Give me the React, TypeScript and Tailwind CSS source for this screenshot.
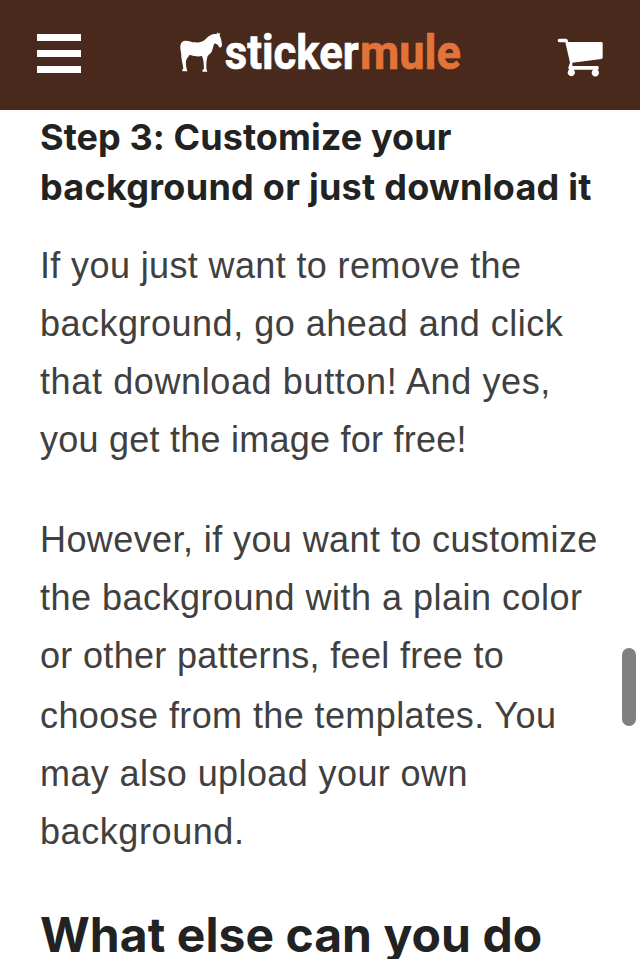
import React from "react";

type Line = { text: string; className: string };

const intro: Line[] = [
  { text: "If you just want to remove the", className: "tracking-[0.37px]" },
  { text: "background, go ahead and click", className: "tracking-[0.5px]" },
  { text: "that download button! And yes,", className: "tracking-[0.62px]" },
  { text: "you get the image for free!", className: "tracking-[0.24px]" },
];

const details: Line[] = [
  { text: "However, if you want to customize", className: "tracking-[0.41px]" },
  { text: "the background with a plain color", className: "tracking-[0.49px]" },
  { text: "or other patterns, feel free to", className: "tracking-[0.32px]" },
  { text: "choose from the templates. You", className: "pt-[2px] tracking-[0.4px]" },
  { text: "may also upload your own", className: "tracking-[0.4px]" },
  { text: "background.", className: "tracking-[0.58px]" },
];

function Lines({ lines }: { lines: Line[] }) {
  return (
    <>
      {lines.map((line) => (
        <span key={line.text} className={`block whitespace-nowrap ${line.className}`}>
          {line.text}
        </span>
      ))}
    </>
  );
}

function Logo() {
  return (
    <svg width="300" height="65" viewBox="0 0 300 65" role="img" aria-label="stickermule">
      <g transform="scale(0.33333) translate(18 24)" fill="#fff">
        <path d="M13 54C14 43 20 38 29 38C40 38 46 43 56 43C67 44 76 42 83 38C90 33 94 27 101 23C107 19 114 18 121 18L126 13L128 18L133 14L131 23C135 30 138 43 138 54L133 59L129 57L126 51L117 46C112 49 112 60 108 69C105 77 98 80 95 84C91 95 91 110 91 122L94 131L80 131L79 127L84 122C83 107 83 96 78 84C65 87 54 84 41 80C38 87 31 90 30 101C29 108 31 117 32 122L34 130L20 130L18 126L22 121L18 100L16 88C17 78 12 64 13 54Z" />
      </g>
      <g fontFamily="Roboto, sans-serif" fontWeight="700" fontSize="48.5" strokeWidth="0.7">
        <text x="54.8" y="49" fill="#fff" stroke="#fff" textLength="134" lengthAdjust="spacingAndGlyphs">sticker</text>
        <text x="190" y="49" fill="#e27439" stroke="#e27439" textLength="101" lengthAdjust="spacingAndGlyphs">mule</text>
      </g>
    </svg>
  );
}

function Cart() {
  return (
    <svg width="80" height="65" viewBox="0 0 240 195" fill="#fff" aria-hidden="true">
      <path d="M43 41H63Q68 41 70 51H169Q173 51 173 55V98Q173 101 169 102L82 113V123H158Q161 123 161 126V131Q161 134 158 134H157A11 11 0 1 1 145 134H86A11 11 0 1 1 72 134Q68 129 71 124L75 113L61 52H43Q38 52 38 46Q38 41 43 41Z" />
    </svg>
  );
}

export default function App() {
  return (
    <div className="relative h-[959px] w-[640px] overflow-hidden bg-white">
      <header className="flex h-[110px] items-start bg-[#48291b]">
        <button aria-label="Menu" className="mt-[33.5px] ml-[37px] flex w-[44px] flex-col gap-[8.5px]">
          <span className="h-[7.5px] w-full bg-white" />
          <span className="h-[7.5px] w-full bg-white" />
          <span className="h-[7.5px] w-full bg-white" />
        </button>
        <div className="mt-5 ml-[89px]">
          <Logo />
        </div>
        <button aria-label="Cart" className="mt-[25px] ml-[75px]">
          <Cart />
        </button>
      </header>
      <main className="px-10 text-[#222]">
        <h3 className="pt-[2px] font-['Inter',sans-serif] text-[36px] leading-[50px] font-bold">
          <span className="block whitespace-nowrap tracking-[0.08px]">Step 3: Customize your</span>
          <span className="block whitespace-nowrap tracking-[0.27px]">background or just download it</span>
        </h3>
        <div className="font-['Liberation_Sans',Arial,sans-serif] text-[36px] leading-[58px] text-[#404040]">
          <p className="mt-[25px]">
            <Lines lines={intro} />
          </p>
          <p className="mt-[42px]">
            <Lines lines={details} />
          </p>
        </div>
        <h2 className="mt-[40px] font-['Inter',sans-serif] text-[48px] leading-[68px] font-bold whitespace-nowrap tracking-[0.05px]">
          What else can you do
        </h2>
      </main>
      <div className="absolute top-[648px] left-[622px] h-[78px] w-[14px] rounded-full bg-[#808080]" />
    </div>
  );
}
